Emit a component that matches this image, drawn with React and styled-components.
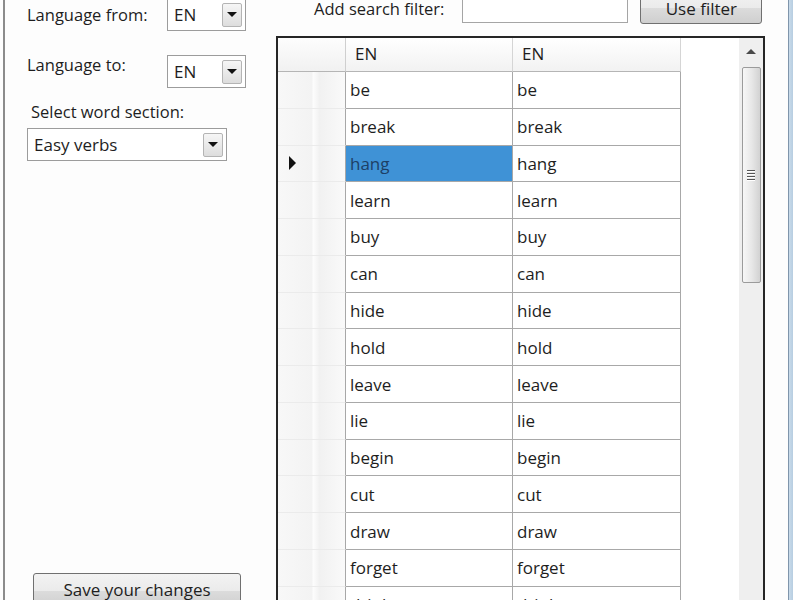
import React from 'react';
import styled, { createGlobalStyle } from 'styled-components';

const GlobalStyle = createGlobalStyle`
  html, body {
    margin: 0;
    padding: 0;
    background: #fdfdfd;
    overflow: hidden;
  }
  body {
    font-family: "Open Sans", "Liberation Sans", sans-serif;
    color: #1e1e1e;
  }
`;

const Window = styled.div`
  width: 793px;
  height: 600px;
  display: flex;
  overflow: hidden;
  box-sizing: border-box;
  padding-left: 3px;
  background: #fdfdfd;
`;

const FrameLeft = styled.div`
  width: 2px;
  background: #8c8c8c;
  flex: none;
`;

const FrameRight = styled.div`
  width: 7px;
  flex: none;
  margin-left: auto;
  border-left: 1px solid #7f95ab;
  background: linear-gradient(to right, #c9dbea, #a9c3da);
`;

const LeftPanel = styled.div`
  width: 271px;
  flex: none;
  display: flex;
  flex-direction: column;
  box-sizing: border-box;
  padding-left: 22px;
`;

const FieldRow = styled.div`
  display: flex;
  align-items: ${p => p.$align || 'center'};
  margin-top: ${p => p.$top || 0}px;
`;

const Label = styled.span`
  font-size: 16.5px;
  width: ${p => p.$width || 'auto'};
  margin-left: ${p => p.$indent || 0}px;
  margin-top: ${p => p.$offset || 0}px;
  white-space: nowrap;
`;

const SelectBox = styled.div`
  width: ${p => p.$width}px;
  height: ${p => p.$height || 33}px;
  box-sizing: border-box;
  border: 1px solid #9c9c9c;
  background: #fff;
  display: flex;
  align-items: center;
  padding: 0 3px 0 6px;
  font-size: 17px;
`;

const SelectText = styled.span`
  flex: 1;
`;

const DropButton = styled.span`
  width: 20px;
  height: 24px;
  box-sizing: border-box;
  border: 1px solid #b4b4b4;
  border-radius: 2px;
  background: linear-gradient(to bottom, #f6f6f6, #dddddd);
  display: flex;
  align-items: center;
  justify-content: center;
`;

const DownTriangle = styled.span`
  width: 0;
  height: 0;
  border-left: 5px solid transparent;
  border-right: 5px solid transparent;
  border-top: 5px solid #111;
`;

const SaveButton = styled.button`
  margin-top: auto;
  margin-bottom: -8px;
  margin-left: 6px;
  width: 208px;
  height: 35px;
  border: 1px solid #707070;
  border-radius: 3px;
  background: linear-gradient(to bottom, #f3f3f3 0%, #ebebeb 50%, #dcdcdc 51%, #cfcfcf 100%);
  font-family: inherit;
  font-size: 17px;
  color: #1e1e1e;
  padding: 0 0 2px;
`;

const RightPanel = styled.div`
  width: 490px;
  flex: none;
  display: flex;
  flex-direction: column;
`;

const FilterBar = styled.div`
  display: flex;
  align-items: flex-end;
  margin-top: -8px;
  height: 32px;
  margin-bottom: 12px;
`;

const FilterLabel = styled.span`
  font-size: 16.5px;
  margin-left: 38px;
  margin-bottom: 4px;
`;

const FilterInput = styled.div`
  width: 166px;
  height: 31px;
  box-sizing: border-box;
  border: 1px solid #a5a5a5;
  background: #fff;
  margin-left: 18px;
  margin-bottom: 1px;
`;

const FilterButton = styled.button`
  width: 122px;
  height: 33px;
  margin-left: 12px;
  border: 1px solid #707070;
  border-radius: 3px;
  background: linear-gradient(to bottom, #f3f3f3 0%, #ebebeb 50%, #dcdcdc 51%, #cfcfcf 100%);
  font-family: inherit;
  font-size: 17px;
  color: #1e1e1e;
  padding: 2px 0 0;
`;

const Grid = styled.div`
  width: 489px;
  flex: 1;
  box-sizing: border-box;
  border: 2px solid #262626;
  border-bottom: none;
  display: flex;
  background: #fff;
  overflow: hidden;
`;

const Table = styled.div`
  display: grid;
  grid-template-columns: 68px 167px 168px 1fr;
  grid-auto-rows: 36.77px;
  grid-template-rows: 34px;
  flex: 1;
  align-content: start;
`;

const Corner = styled.div`
  background: linear-gradient(to bottom, #fdfdfd, #f1f1f1);
  border-right: 1px solid #cfcfcf;
  border-bottom: 1px solid #b5b5b5;
`;

const HeaderCell = styled.div`
  background: linear-gradient(to bottom, #ffffff, #f2f2f2);
  border-right: 1px solid #d5d5d5;
  border-bottom: 1px solid #b5b5b5;
  font-size: 17px;
  display: flex;
  align-items: center;
  padding: 0 0 3px 9px;
`;

const HeaderFill = styled.div`
  border-bottom: 1px solid #fff;
`;

const RowHeader = styled.div`
  background: linear-gradient(to right, #f8f8f8 0%, #f3f3f3 50%, #fcfcfc 53%, #f1f1f1 62%, #fafafa 100%);
  border-bottom: 1px solid #ebebeb;
  border-right: 1px solid #a8a8a8;
  display: flex;
  align-items: center;
  padding-left: 11px;
`;

const RowArrow = styled.span`
  width: 0;
  height: 0;
  border-top: 7px solid transparent;
  border-bottom: 7px solid transparent;
  border-left: 7px solid #111;
`;

const Cell = styled.div`
  border-right: 1px solid #a8a8a8;
  border-bottom: 1px solid #a8a8a8;
  font-size: 17px;
  display: flex;
  align-items: center;
  padding-left: 4px;
  background: ${p => (p.$selected ? '#3f92d6' : '#fff')};
  color: ${p => (p.$selected ? '#1d3f66' : '#1e1e1e')};
`;

const Blank = styled.div``;

const Scrollbar = styled.div`
  width: 24px;
  flex: none;
  background: #efefef;
  display: flex;
  flex-direction: column;
  align-items: center;
`;

const UpArrow = styled.span`
  margin-top: 11px;
  width: 0;
  height: 0;
  border-left: 5px solid transparent;
  border-right: 5px solid transparent;
  border-bottom: 5px solid #4a4a4a;
`;

const Thumb = styled.div`
  margin-top: 13px;
  width: 19px;
  height: 216px;
  box-sizing: border-box;
  border: 1px solid #9b9b9b;
  border-radius: 2px;
  background: linear-gradient(to right, #f7f7f7, #e8e8e8 50%, #d2d2d2);
  display: flex;
  flex-direction: column;
  align-items: center;
  justify-content: center;
  gap: 2px;
`;

const Grip = styled.span`
  width: 8px;
  height: 1px;
  background: #555;
  box-shadow: 0 1px 0 #fff;
`;

const RightGap = styled.div`
  width: 22px;
  flex: none;
`;

const words = [
  'be', 'break', 'hang', 'learn', 'buy', 'can', 'hide', 'hold',
  'leave', 'lie', 'begin', 'cut', 'draw', 'forget', 'drink',
];

export default function App() {
  return (
    <>
      <GlobalStyle />
      <Window>
        <FrameLeft />
        <LeftPanel>
          <FieldRow $top={-2}>
            <Label $width="140px">Language from:</Label>
            <SelectBox $width={79}>
              <SelectText>EN</SelectText>
              <DropButton><DownTriangle /></DropButton>
            </SelectBox>
          </FieldRow>
          <FieldRow $top={24} $align="flex-start">
            <Label $width="140px" $offset={-2}>Language to:</Label>
            <SelectBox $width={79}>
              <SelectText>EN</SelectText>
              <DropButton><DownTriangle /></DropButton>
            </SelectBox>
          </FieldRow>
          <FieldRow $top={12}>
            <Label $indent={4}>Select word section:</Label>
          </FieldRow>
          <FieldRow $top={5}>
            <SelectBox $width={200} $height={33}>
              <SelectText>Easy verbs</SelectText>
              <DropButton><DownTriangle /></DropButton>
            </SelectBox>
          </FieldRow>
          <SaveButton>Save your changes</SaveButton>
        </LeftPanel>
        <RightPanel>
          <FilterBar>
            <FilterLabel>Add search filter:</FilterLabel>
            <FilterInput />
            <FilterButton>Use filter</FilterButton>
          </FilterBar>
          <Grid>
            <Table>
              <Corner />
              <HeaderCell>EN</HeaderCell>
              <HeaderCell>EN</HeaderCell>
              <HeaderFill />
              {words.map((w, i) => (
                <React.Fragment key={w}>
                  <RowHeader>{i === 2 && <RowArrow />}</RowHeader>
                  <Cell $selected={i === 2}>{w}</Cell>
                  <Cell>{w}</Cell>
                  <Blank />
                </React.Fragment>
              ))}
            </Table>
            <Scrollbar>
              <UpArrow />
              <Thumb>
                <Grip />
                <Grip />
                <Grip />
                <Grip />
              </Thumb>
            </Scrollbar>
          </Grid>
        </RightPanel>
        <RightGap />
        <FrameRight />
      </Window>
    </>
  );
}
